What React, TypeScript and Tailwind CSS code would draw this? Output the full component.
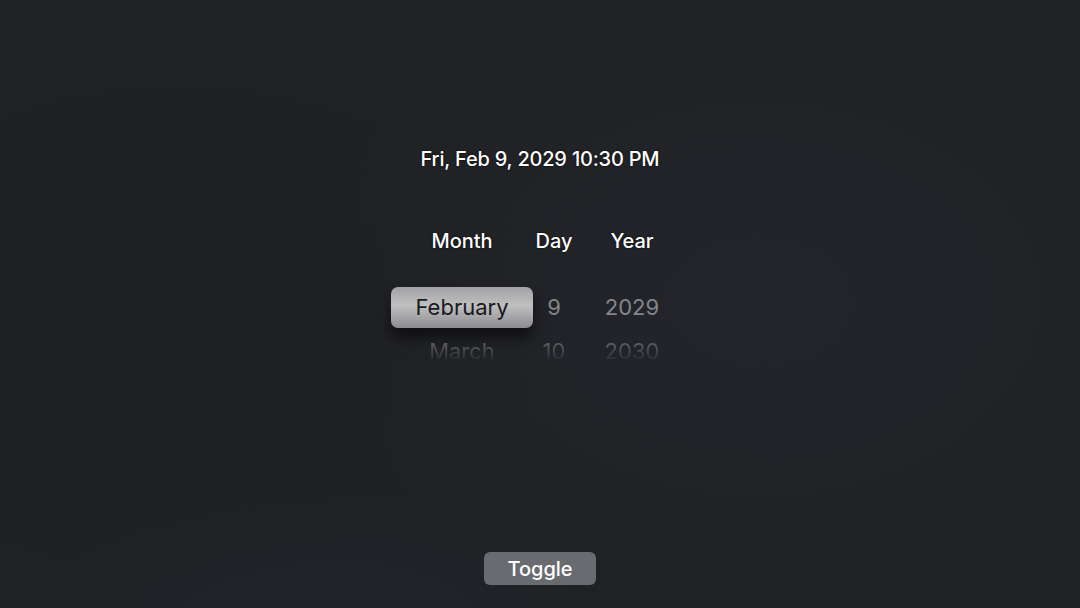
const columns = [
  { label: "Month", width: "w-[142px]", values: ["February", "March"] },
  { label: "Day", width: "w-[42px]", values: ["9", "10"] },
  { label: "Year", width: "w-[114px]", values: ["2029", "2030"] },
];

function App() {
  return (
    <div
      className="relative flex h-[608px] w-[1080px] flex-col items-center overflow-hidden bg-[#202124] text-white"
      style={{ fontFamily: "Inter, 'Noto Sans', sans-serif" }}
    >
      <div className="pointer-events-none absolute inset-0 bg-[radial-gradient(ellipse_460px_320px_at_760px_300px,rgba(40,43,54,0.4),transparent)]" />
      <div className="pointer-events-none absolute inset-0 bg-[radial-gradient(ellipse_300px_140px_at_330px_630px,rgba(36,40,54,0.45),transparent)]" />
      <div className="pointer-events-none absolute inset-0 bg-[radial-gradient(ellipse_380px_260px_at_180px_330px,rgba(30,31,33,0.6),transparent)]" />

      <div className="relative mt-[146px] text-[20px] font-medium leading-[26px] tracking-[-0.2px] [text-shadow:0_0_2px_rgba(0,0,0,0.9)]">
        Fri, Feb 9, 2029 10:30 PM
      </div>

      <div className="relative mt-[56px] flex">
        {columns.map((col, i) => (
          <div key={col.label} className={`${col.width} flex flex-col items-center`}>
            <div className="h-[26px] text-[20px] font-medium leading-[26px] [text-shadow:0_0_2px_rgba(0,0,0,0.9)]">
              {col.label}
            </div>
            {i === 0 ? (
              <div className="mt-[33px] flex h-[41px] w-full items-center justify-center rounded-[7px] bg-[linear-gradient(to_bottom,#a2a2a4,#bfbfc0_45%,#8d8d90)] text-[22px] text-[#1a1a1c] shadow-[0_10px_14px_rgba(0,0,0,0.55)]">
                {col.values[0]}
              </div>
            ) : (
              <div className="mt-[33px] flex h-[41px] w-full items-center justify-center text-[22px] text-[#85868a]">
                {col.values[0]}
              </div>
            )}
            <div className="mt-[6px] bg-[linear-gradient(to_bottom,rgba(120,121,126,0.8)_20%,rgba(120,121,126,0)_85%)] bg-clip-text text-[22px] leading-[34px] text-transparent">
              {col.values[1]}
            </div>
          </div>
        ))}
      </div>

      <div className="relative mt-auto mb-[23px]">
        <button className="flex h-[33px] w-[112px] items-center justify-center rounded-[6px] bg-[#696b70] text-[20px] font-medium text-white">
          Toggle
        </button>
      </div>
    </div>
  );
}

export default App;
